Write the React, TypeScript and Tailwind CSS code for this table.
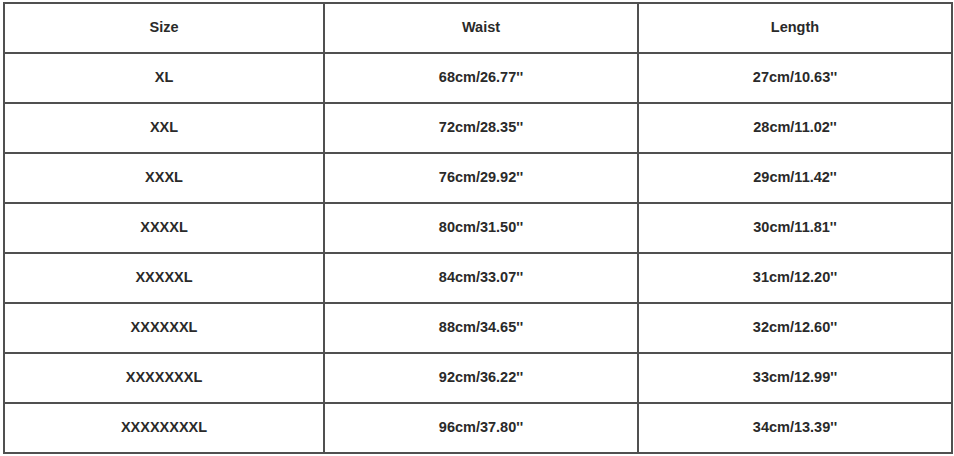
const rows = [
  ['XL', '68cm/26.77\'\'', '27cm/10.63\'\''],
  ['XXL', '72cm/28.35\'\'', '28cm/11.02\'\''],
  ['XXXL', '76cm/29.92\'\'', '29cm/11.42\'\''],
  ['XXXXL', '80cm/31.50\'\'', '30cm/11.81\'\''],
  ['XXXXXL', '84cm/33.07\'\'', '31cm/12.20\'\''],
  ['XXXXXXL', '88cm/34.65\'\'', '32cm/12.60\'\''],
  ['XXXXXXXL', '92cm/36.22\'\'', '33cm/12.99\'\''],
  ['XXXXXXXXL', '96cm/37.80\'\'', '34cm/13.39\'\''],
];

export default function App() {
  return (
    <div className="h-[456px] w-[954px] bg-white pl-[3px] pt-[2px] font-['Liberation_Sans',Arial,sans-serif]">
      <table className="w-[948px] table-fixed border-collapse text-center text-[14.5px] font-bold text-[#2a2a2a]">
        <colgroup>
          <col className="w-[320px]" />
          <col className="w-[314px]" />
          <col className="w-[314px]" />
        </colgroup>
        <thead>
          <tr className="h-[50px]">
            {['Size', 'Waist', 'Length'].map((h) => (
              <th key={h} className="border-2 border-[#505050] font-bold">
                {h}
              </th>
            ))}
          </tr>
        </thead>
        <tbody>
          {rows.map((r) => (
            <tr key={r[0]} className="h-[50px]">
              {r.map((c, i) => (
                <td key={i} className="border-2 border-[#505050]">
                  {c}
                </td>
              ))}
            </tr>
          ))}
        </tbody>
      </table>
    </div>
  );
}
